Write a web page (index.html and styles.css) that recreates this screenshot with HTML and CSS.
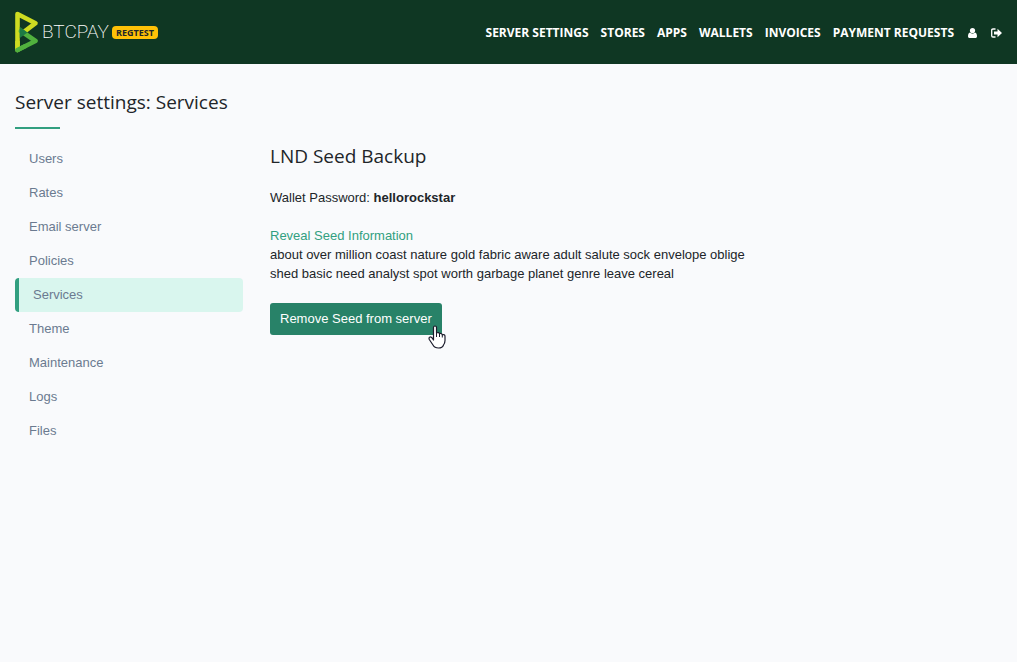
FILE: index.html
```html
<!DOCTYPE html>
<html lang="en">
<head>
<meta charset="utf-8">
<meta name="viewport" content="width=device-width, initial-scale=1">
<title>Server settings: Services</title>
<link rel="stylesheet" href="styles.css">
</head>
<body>
<header class="topbar">
  <a class="brand" href="#">
    <svg class="brand-mark" viewBox="0 0 24 42" aria-hidden="true">
      <path d="M2.5 39V3L20.5 12.2L9 20.8" fill="none" stroke="#cedc21" stroke-width="4.600" stroke-linecap="round" stroke-linejoin="round"/>
      <path d="M6 20L20.500 30L2.500 39" fill="none" stroke="#51b13e" stroke-width="4.600" stroke-linecap="round" stroke-linejoin="round"/>
      <path d="M2.500 39V30" fill="none" stroke="#cedc21" stroke-width="4.600"/>
      <path d="M2.500 39L10 35.300" fill="none" stroke="#51b13e" stroke-width="4.600" stroke-linecap="round"/>
      <path d="M4.800 15.800L12.500 21.500L4.800 27Z" fill="#1e7a44"/>
    </svg>
    <span class="brand-name">BTCPAY</span>
    <span class="badge">REGTEST</span>
  </a>
  <nav class="menu" aria-label="Main">
    <a href="#">Server settings</a>
    <a href="#">Stores</a>
    <a href="#">Apps</a>
    <a href="#">Wallets</a>
    <a href="#">Invoices</a>
    <a href="#">Payment Requests</a>
    <a class="icon-link" href="#" aria-label="Account"><svg class="user-icon" viewBox="0 0 9 10" aria-hidden="true"><circle cx="4.5" cy="2.6" r="2.6"/><path d="M2 4.600C.6 5 0 6.500 0 8.200C0 9.300.7 10 1.600 10H7.400C8.300 10 9 9.300 9 8.200C9 6.500 8.400 5 7 4.600C5.700 6 3.300 6 2 4.600Z"/></svg></a>
    <a class="icon-link" href="#" aria-label="Log out"><svg class="exit-icon" viewBox="0 0 11 10" aria-hidden="true"><path d="M4.500 1H2Q.7 1 .7 2.300V7.700Q.7 9 2 9H4.500" fill="none" stroke="#fff" stroke-width="1.300"/><path d="M3 3.500H6.500V.8L11 5L6.500 9.200V6.500H3Z"/></svg></a>
  </nav>
</header>
<main class="page">
  <h1 class="title">Server settings: Services</h1>
  <hr class="accent">
  <div class="columns">
    <nav class="side" aria-label="Server settings">
      <a href="#">Users</a>
      <a href="#">Rates</a>
      <a href="#">Email server</a>
      <a href="#">Policies</a>
      <a class="active" href="#" aria-current="page">Services</a>
      <a href="#">Theme</a>
      <a href="#">Maintenance</a>
      <a href="#">Logs</a>
      <a href="#">Files</a>
    </nav>
    <section class="content">
      <h2 class="subtitle">LND Seed Backup</h2>
      <p class="password">Wallet Password: <strong>hellorockstar</strong></p>
      <a class="reveal" href="#">Reveal Seed Information</a>
      <p class="seed">about over million coast nature gold fabric aware adult salute sock envelope oblige shed basic need analyst spot worth garbage planet genre leave cereal</p>
      <div class="action">
        <button class="remove" type="button">Remove Seed from server</button>
        <svg class="pointer" viewBox="0 0 18 24" aria-hidden="true"><path d="M5.500 15V2.500Q5.500 1 7 1T8.500 2.500V8Q11 6.700 11.500 8.800Q13.500 7.700 14.200 9.800Q17 9 17 11.500V15.500Q17 18 15.500 20Q14.500 23 10.500 23Q6.500 23 5 20L1.300 14.500Q.5 12.500 2 12Q3.500 11.500 5.500 15Z" fill="#fff" stroke="#1b1b2b" stroke-width="1.200" stroke-linejoin="round"/><path d="M8.500 8V12M11.500 9V12M14.300 10V12.500" stroke="#1b1b2b" stroke-width="1"/></svg>
      </div>
    </section>
  </div>
</main>
</body>
</html>
```
FILE: styles.css
```css
* { box-sizing: border-box; }

body {
  margin: 0;
  background: #f9fafc;
  color: #212529;
  font: 13px/19px "Liberation Sans", Arial, sans-serif;
}

a { text-decoration: none; }
h1, h2, p { margin: 0; }

.topbar {
  display: flex;
  align-items: center;
  justify-content: space-between;
  min-height: 64px;
  padding: 0 15px;
  background: #0f3723;
}

.brand {
  display: flex;
  align-items: center;
  color: #fff;
}

.brand-mark {
  width: 24px;
  height: 42px;
}

.brand-name {
  margin: 0 3px;
  font: 200 19px/24px Roboto, sans-serif;
}

.badge {
  padding: 0 4px;
  border-radius: 4px;
  background: #ffc107;
  color: #212529;
  font: 700 9px/13px "Open Sans", sans-serif;
}

.menu {
  display: flex;
  align-items: center;
  gap: 12px;
  padding-top: 2px;
}

.menu a {
  display: flex;
  color: #fff;
  font: 700 12px/18px "Open Sans", sans-serif;
  text-transform: uppercase;
}

.menu .icon-link { margin-left: 2px; }
.menu svg { fill: #fff; }
.user-icon { width: 9px; height: 10px; }
.exit-icon { width: 11px; height: 10px; }

.page { padding: 24px 15px; }

.title, .subtitle {
  font: 400 19px/28px "Open Sans", sans-serif;
}

.accent {
  width: 45px;
  height: 2px;
  margin: 11px 0 13px;
  border: 0;
  background: #329f80;
}

.columns {
  display: grid;
  grid-template-columns: minmax(0, 19fr) minmax(0, 61fr);
  gap: 27px;
}

.side {
  display: flex;
  flex-direction: column;
}

.side a {
  padding: 0 14px;
  border-radius: 4px;
  color: #6b7a90;
  line-height: 34px;
}

.side .active {
  border-left: 4px solid #329f80;
  background: #d9f6ee;
}

.content { max-width: 480px; }
.password { margin: 18px 0 19px; }
.reveal { color: #329f80; }

.action {
  position: relative;
  width: max-content;
  margin-top: 20px;
}

.remove {
  display: block;
  padding: 6px 10px;
  border: 0;
  border-radius: 3px;
  background: #288268;
  color: #fff;
  font: inherit;
  line-height: 20px;
}

.pointer {
  position: absolute;
  right: -4px;
  bottom: -14px;
  width: 18px;
  height: 24px;
}
```
